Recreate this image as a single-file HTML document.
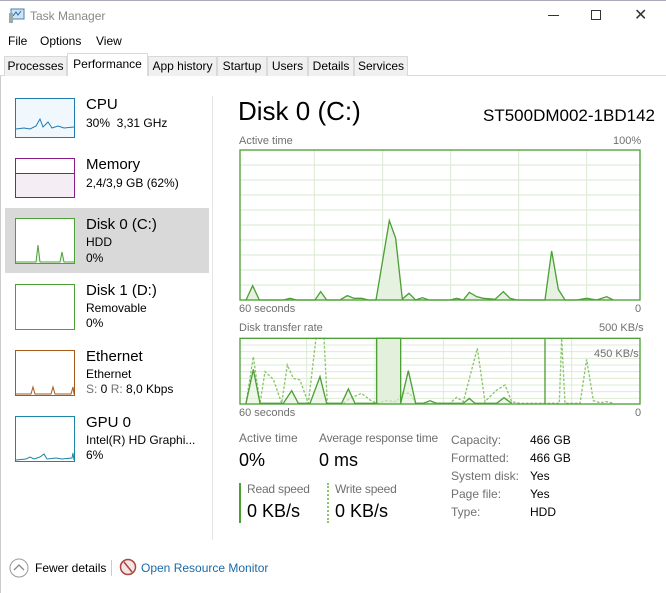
<!DOCTYPE html>
<html><head><meta charset="utf-8"><style>
*{margin:0;padding:0;box-sizing:border-box}
body{width:666px;height:593px;background:#fff;font-family:"Liberation Sans",sans-serif;color:#000;position:relative;overflow:hidden;font-size:12px}
.a{position:absolute;white-space:nowrap}
.tab{position:absolute;top:56px;height:20px;background:#f0f0f0;border:1px solid #d9d9d9;border-bottom:none;font-size:12px;line-height:18px;text-align:center;color:#000}
.th{position:absolute;left:15px;width:60px;border:1px solid}
.l1{font-size:15px;left:86px}
.l2{font-size:12px;left:86px}
.g{color:#707070}
</style></head><body>
<div class="a" style="left:0;top:0;width:666px;height:1px;background:#aab"></div>
<svg class="a" style="left:8px;top:8px" width="18" height="16"><rect x="3" y="1" width="13" height="10" fill="#cfe3f3" stroke="#4b7fb0"/><polyline points="5,8 8,4 10,7 13,3" fill="none" stroke="#2a6ab0"/><rect x="1" y="5" width="4" height="10" fill="#9aa"/></svg>
<div class="a g" style="left:30px;top:9px;font-size:12px;color:#888">Task Manager</div>
<div class="a" style="left:548px;top:15px;width:11px;height:1px;background:#333"></div>
<div class="a" style="left:591px;top:10px;width:10px;height:10px;border:1px solid #333"></div>
<div class="a" style="left:634px;top:5px;font-size:16px;color:#333">✕</div>
<div class="a" style="left:8px;top:34px;font-size:12px">File</div>
<div class="a" style="left:40px;top:34px;font-size:12px">Options</div>
<div class="a" style="left:96px;top:34px;font-size:12px">View</div>
<div class="a" style="left:0;top:75px;width:666px;height:1px;background:#d9d9d9"></div>
<div class="tab" style="left:4px;width:63px">Processes</div>
<div class="tab" style="left:67px;width:81px;top:53px;height:23px;background:#fff;line-height:20px">Performance</div>
<div class="tab" style="left:148px;width:69px">App history</div>
<div class="tab" style="left:217px;width:50px">Startup</div>
<div class="tab" style="left:267px;width:41px">Users</div>
<div class="tab" style="left:308px;width:46px">Details</div>
<div class="tab" style="left:354px;width:54px">Services</div>
<div class="a" style="left:0;top:76px;width:1px;height:517px;background:#ccc"></div>
<div class="a" style="left:212px;top:96px;width:1px;height:444px;background:#e5e5e5"></div>

<div class="a" style="left:5px;top:208px;width:204px;height:65px;background:#d9d9d9"></div>
<div class="th" style="top:98px;height:40px;border-color:#1f7ab0;background:#f1f8fd"><svg width="58" height="38"><polyline points="0,30 8,29 14,30 20,27 24,20 27,28 32,23 36,29 42,27 48,29 58,28" fill="none" stroke="#1f7ab0"/></svg></div>
<div class="a l1" style="top:96px">CPU</div><div class="a l2" style="top:116px">30%&nbsp; 3,31 GHz</div>
<div class="th" style="top:158px;height:40px;border-color:#8b1a8b;background:#fff"><div style="position:absolute;left:0;right:0;top:14px;bottom:0;background:#f4eef4;border-top:1px solid #8b1a8b"></div></div>
<div class="a l1" style="top:156px">Memory</div><div class="a l2" style="top:176px">2,4/3,9 GB (62%)</div>
<div class="th" style="top:218px;height:46px;border-color:#4da036;background:#fff"><svg width="58" height="44"><polyline points="0,43 20,43 22,26 24,43 44,43 46,33 48,43 58,43" fill="#e5f3df" stroke="#4da036"/></svg></div>
<div class="a l1" style="top:216px">Disk 0 (C:)</div><div class="a l2" style="top:235px">HDD</div><div class="a l2" style="top:251px">0%</div>
<div class="th" style="top:284px;height:46px;border-color:#4da036"></div>
<div class="a l1" style="top:282px">Disk 1 (D:)</div><div class="a l2" style="top:301px">Removable</div><div class="a l2" style="top:316px">0%</div>
<div class="th" style="top:350px;height:46px;border-color:#a7591a"><svg width="58" height="44"><polyline points="0,43 15,43 17,36 19,43 35,43 37,36 39,43 55,43 57,36 58,43" fill="none" stroke="#a7591a"/></svg></div>
<div class="a l1" style="top:348px">Ethernet</div><div class="a l2" style="top:367px">Ethernet</div><div class="a l2" style="top:382px"><span class="g">S:</span> 0 <span class="g">R:</span> 8,0 Kbps</div>
<div class="th" style="top:416px;height:46px;border-color:#1a87a8"><svg width="58" height="44"><polyline points="0,43 10,42 14,40 18,42 24,40 28,37 31,42 40,41 46,42 56,41 57,36 58,43" fill="none" stroke="#1a87a8"/></svg></div>
<div class="a l1" style="top:414px">GPU 0</div><div class="a l2" style="top:433px">Intel(R) HD Graphi...</div><div class="a l2" style="top:448px">6%</div>

<div class="a" style="left:238px;top:96px;font-size:26px">Disk 0 (C:)</div>
<div class="a" style="left:483px;top:106px;font-size:17px">ST500DM002-1BD142</div>
<div class="a g" style="left:239px;top:135px;font-size:11px">Active time</div>
<div class="a g" style="left:613px;top:135px;font-size:11px">100%</div>
<svg class="a" style="left:230px;top:90px" width="420" height="230" viewBox="0 0 1260 690">
<g stroke="#d9ead3" stroke-width="3">
<line x1="30" y1="225" x2="1230" y2="225"/><line x1="30" y1="270" x2="1230" y2="270"/><line x1="30" y1="315" x2="1230" y2="315"/><line x1="30" y1="360" x2="1230" y2="360"/><line x1="30" y1="405" x2="1230" y2="405"/><line x1="30" y1="450" x2="1230" y2="450"/><line x1="30" y1="495" x2="1230" y2="495"/><line x1="30" y1="540" x2="1230" y2="540"/><line x1="30" y1="585" x2="1230" y2="585"/>
<line x1="253" y1="180" x2="253" y2="630"/><line x1="458" y1="180" x2="458" y2="630"/><line x1="662" y1="180" x2="662" y2="630"/><line x1="866" y1="180" x2="866" y2="630"/><line x1="1070" y1="180" x2="1070" y2="630"/>
</g>
<polyline points="48,630 68,587 88,630 160,630 180,625 200,630 255,630 272,605 290,630 330,630 352,617 372,625 395,625 415,630 438,630 478,392 497,445 517,627 537,610 557,630 577,623 597,630 660,630 680,625 700,630 718,607 740,620 760,625 795,628 820,605 840,625 860,630 945,630 965,483 985,598 1005,630 1040,630 1070,625 1100,630 1130,620 1150,630" fill="#e6f2e0" stroke="#4da036" stroke-width="4"/>
<rect x="30" y="180" width="1200" height="450" fill="none" stroke="#4da036" stroke-width="4"/>
</svg>
<div class="a g" style="left:239px;top:303px;font-size:11px">60 seconds</div>
<div class="a g" style="left:635px;top:303px;font-size:11px">0</div>
<div class="a g" style="left:239px;top:322px;font-size:11px">Disk transfer rate</div>
<div class="a g" style="left:599px;top:322px;font-size:11px">500 KB/s</div>
<svg class="a" style="left:230px;top:320px" width="420" height="100" viewBox="0 0 1260 300">
<g stroke="#dcebd5" stroke-width="3">
<line x1="30" y1="75" x2="1230" y2="75"/><line x1="30" y1="95" x2="1230" y2="95"/><line x1="30" y1="115" x2="1230" y2="115"/><line x1="30" y1="135" x2="1230" y2="135"/><line x1="30" y1="155" x2="1230" y2="155"/><line x1="30" y1="175" x2="1230" y2="175"/><line x1="30" y1="195" x2="1230" y2="195"/><line x1="30" y1="215" x2="1230" y2="215"/><line x1="30" y1="235" x2="1230" y2="235"/>
<line x1="640" y1="55" x2="640" y2="252"/><line x1="845" y1="55" x2="845" y2="252"/><line x1="1025" y1="55" x2="1025" y2="252"/><line x1="435" y1="55" x2="435" y2="252"/><line x1="230" y1="55" x2="230" y2="252"/>
</g>
<rect x="440" y="55" width="72" height="197" fill="#e3f1dc"/>
<polyline points="48,250 70,110 90,250 105,155 130,178 155,250 172,135 190,175 210,180 235,250 258,55 282,55 292,250 340,250 360,235 395,220 420,240 440,250 470,242 500,245 515,220 540,220 557,250 660,250 680,232 700,245 742,85 765,245 800,210 825,195 845,245 870,250 988,250 995,55 1005,250 1050,250 1070,118 1090,242 1110,248 1130,245 1150,250" fill="none" stroke="#8cc46e" stroke-width="4" stroke-dasharray="8,5"/>
<polyline points="48,250 70,148 90,250 160,250 185,212 205,250 240,250 270,170 290,250 335,250 355,207 375,250 440,250 440,55 512,55 512,250 535,152 557,250 580,250 600,242 620,250 700,250 718,235 735,250 800,250 822,233 845,250" fill="#e3f1dc" fill-opacity=".6" stroke="#4da036" stroke-width="4"/>
<line x1="945" y1="55" x2="945" y2="252" stroke="#4da036" stroke-width="4"/>
<rect x="30" y="55" width="1200" height="197" fill="none" stroke="#4da036" stroke-width="4"/>
</svg>
<div class="a g" style="left:594px;top:348px;font-size:11px">450 KB/s</div>
<div class="a g" style="left:239px;top:407px;font-size:11px">60 seconds</div>
<div class="a g" style="left:635px;top:407px;font-size:11px">0</div>

<div class="a g" style="left:239px;top:431px;font-size:12px">Active time</div>
<div class="a" style="left:239px;top:450px;font-size:18px">0%</div>
<div class="a g" style="left:319px;top:431px;font-size:12px;letter-spacing:-0.2px">Average response time</div>
<div class="a" style="left:319px;top:450px;font-size:18px">0 ms</div>
<div class="a" style="left:239px;top:483px;width:2px;height:40px;background:#4da036"></div>
<div class="a g" style="left:247px;top:482px;font-size:12px;letter-spacing:-0.2px">Read speed</div>
<div class="a" style="left:247px;top:501px;font-size:18px">0 KB/s</div>
<div class="a" style="left:327px;top:483px;width:0;height:40px;border-left:2px dotted #8cc46e"></div>
<div class="a g" style="left:335px;top:482px;font-size:12px;letter-spacing:-0.2px">Write speed</div>
<div class="a" style="left:335px;top:501px;font-size:18px">0 KB/s</div>
<div class="a g" style="left:451px;top:431px;font-size:12px;line-height:18px">Capacity:<br>Formatted:<br>System disk:<br>Page file:<br>Type:</div>
<div class="a" style="left:530px;top:431px;font-size:12px;line-height:18px">466 GB<br>466 GB<br>Yes<br>Yes<br>HDD</div>

<svg class="a" style="left:9px;top:558px" width="20" height="20"><circle cx="10" cy="10" r="9" fill="none" stroke="#999"/><polyline points="5,12 10,7 15,12" fill="none" stroke="#888" stroke-width="1.3"/></svg>
<div class="a" style="left:35px;top:561px;font-size:12px">Fewer details</div>
<div class="a" style="left:111px;top:560px;width:1px;height:16px;background:#ccc"></div>
<svg class="a" style="left:119px;top:558px" width="18" height="18"><circle cx="9" cy="9" r="7.5" fill="#f4e4e4" stroke="#a44" stroke-width="1.5"/><line x1="5" y1="4" x2="13" y2="14" stroke="#a44" stroke-width="1.5"/></svg>
<div class="a" style="left:141px;top:561px;font-size:12px;color:#1a6aa8">Open Resource Monitor</div>
</body></html>
